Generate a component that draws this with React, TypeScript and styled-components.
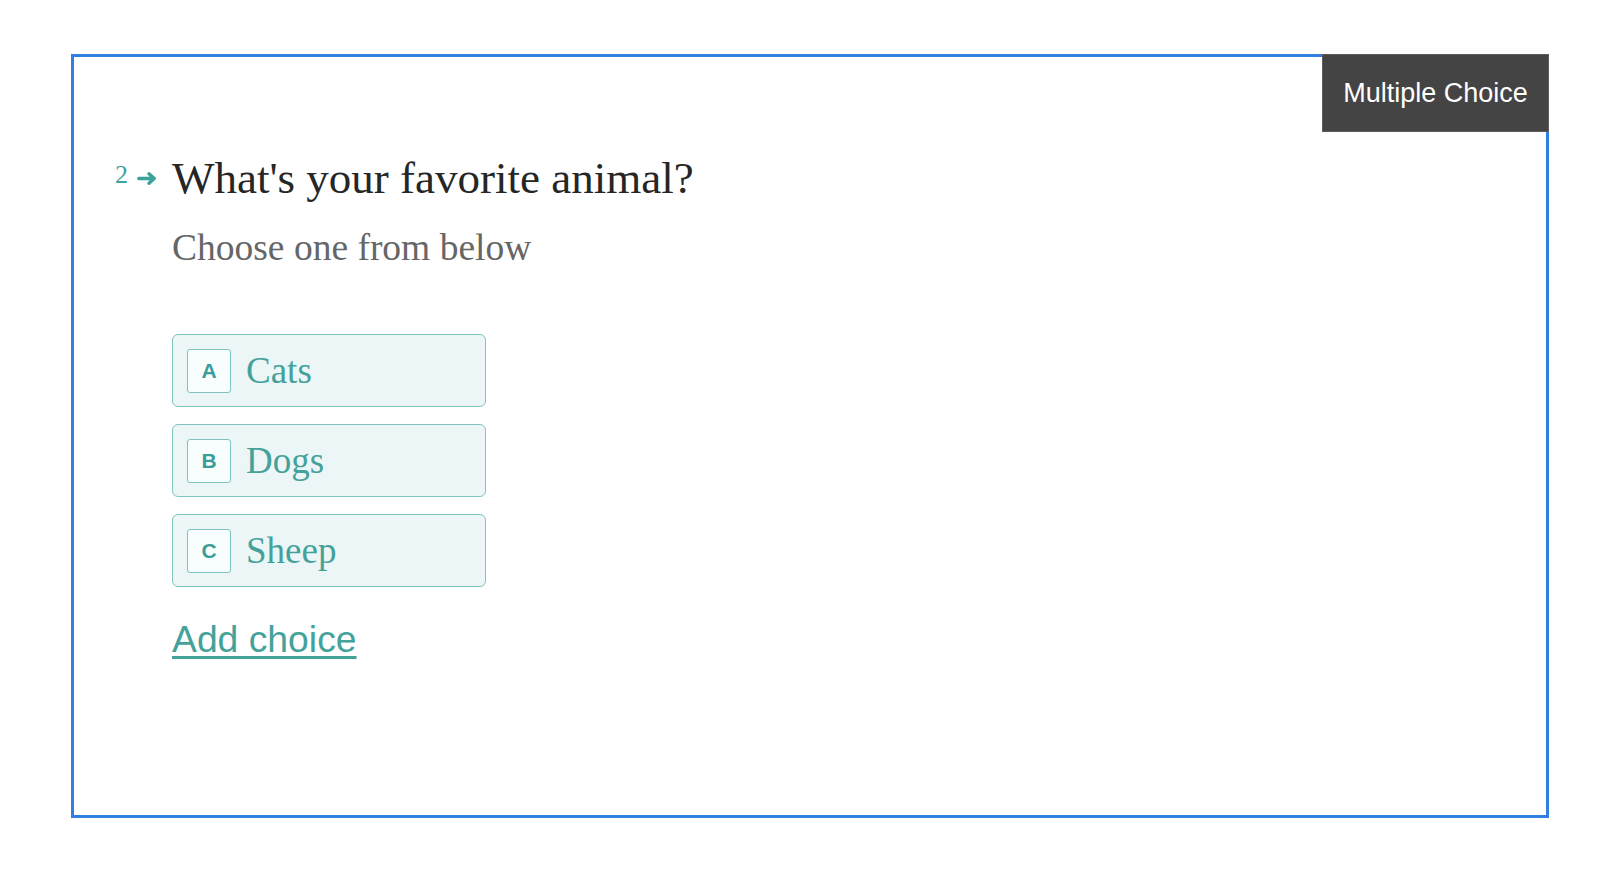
import React from "react";
import styled, { createGlobalStyle } from "styled-components";

const Global = createGlobalStyle`
  html, body { margin: 0; padding: 0; background: #ffffff; }
  body { font-family: "Liberation Sans", Arial, sans-serif; }
`;

const Page = styled.div`
  padding: 54px 0 0 71px;
`;

const Frame = styled.section`
  position: relative;
  box-sizing: border-box;
  width: 1478px;
  height: 764px;
  border: 3px solid #3080e4;
  padding: 94px 0 0 41px;
`;

const Tag = styled.div`
  position: absolute;
  top: -3px;
  right: -3px;
  width: 227px;
  height: 78px;
  box-sizing: border-box;
  background: #444444;
  border: 1px solid #5c5c5c;
  color: #ffffff;
  font-family: "Liberation Sans", Arial, sans-serif;
  font-size: 27px;
  display: flex;
  align-items: center;
  justify-content: center;
`;

const Header = styled.div`
  display: flex;
  align-items: flex-start;
`;

const Counter = styled.div`
  width: 57px;
  flex: none;
  display: flex;
  align-items: center;
  gap: 9px;
  padding-top: 11px;
  color: #3aa39c;
  font-family: "Liberation Serif", "Times New Roman", serif;
  font-size: 26px;
  line-height: 26px;

  svg {
    margin-top: 6px;
  }
`;

const Title = styled.h1`
  margin: 0;
  font-family: "Liberation Serif", "Times New Roman", serif;
  font-weight: 400;
  font-size: 45px;
  line-height: 54px;
  color: #262626;
`;

const Body = styled.div`
  margin-left: 57px;
`;

const Subtitle = styled.p`
  margin: 21px 0 0;
  font-family: "Liberation Serif", "Times New Roman", serif;
  font-size: 37.5px;
  line-height: 44px;
  color: #666666;
`;

const Choices = styled.div`
  margin-top: 64px;
  display: flex;
  flex-direction: column;
  gap: 17px;
  width: 314px;
`;

const Choice = styled.div`
  box-sizing: border-box;
  height: 73px;
  display: flex;
  align-items: center;
  padding: 0 14px;
  border: 1.5px solid #80c4bf;
  border-radius: 6px;
  background: #edf6f6;
`;

const Key = styled.span`
  box-sizing: border-box;
  width: 44px;
  height: 44px;
  flex: none;
  display: flex;
  align-items: center;
  justify-content: center;
  border: 1.5px solid #80c4bf;
  border-radius: 3px;
  background: #f8fdfd;
  color: #3a9e98;
  font-family: "Liberation Sans", Arial, sans-serif;
  font-weight: 700;
  font-size: 21px;
`;

const Label = styled.span`
  margin-left: 15px;
  font-family: "Liberation Serif", "Times New Roman", serif;
  font-size: 37px;
  color: #44a29b;
`;

const AddChoice = styled.a`
  display: inline-block;
  margin-top: 31px;
  font-family: "Liberation Sans", Arial, sans-serif;
  font-size: 37.3px;
  color: #44a29b;
  text-decoration: underline;
  text-decoration-thickness: 3px;
  text-underline-offset: 4px;
  cursor: pointer;
`;

const Arrow = () => (
  <svg width="20" height="13" viewBox="0 0 20 13" fill="none">
    <path
      d="M1.8 6.5H17.2M12 1.8L17.2 6.5L12 11.2"
      stroke="#3aa39c"
      strokeWidth="3.4"
      strokeLinecap="round"
      strokeLinejoin="round"
    />
  </svg>
);

const choices = [
  { key: "A", label: "Cats" },
  { key: "B", label: "Dogs" },
  { key: "C", label: "Sheep" },
];

export default function App() {
  return (
    <>
      <Global />
      <Page>
        <Frame>
          <Tag>Multiple Choice</Tag>
          <Header>
            <Counter>
              <span>2</span>
              <Arrow />
            </Counter>
            <Title>What's your favorite animal?</Title>
          </Header>
          <Body>
            <Subtitle>Choose one from below</Subtitle>
            <Choices>
              {choices.map((c) => (
                <Choice key={c.key}>
                  <Key>{c.key}</Key>
                  <Label>{c.label}</Label>
                </Choice>
              ))}
            </Choices>
            <AddChoice>Add choice</AddChoice>
          </Body>
        </Frame>
      </Page>
    </>
  );
}
